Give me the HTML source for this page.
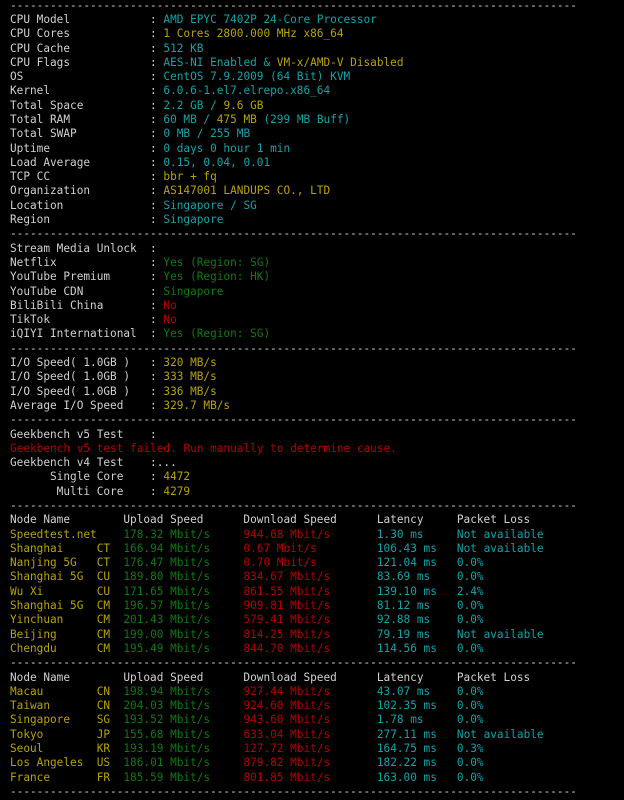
<!DOCTYPE html>
<html><head><meta charset="utf-8"><style>
html,body{margin:0;padding:0;background:#000;width:624px;height:800px;overflow:hidden}
pre{margin:0;position:absolute;left:10px;top:-1.4px;font-family:"DejaVu Sans Mono","Liberation Mono",monospace;font-size:11.08px;line-height:14.29px;color:#d0d0d0;white-space:pre}
.c{color:#13a3a8}.y{color:#b8a208}.g{color:#0e7a10}.r{color:#b40000}
</style></head><body><pre>-------------------------------------------------------------------------------------
CPU Model            : <span class="c">AMD EPYC 7402P 24-Core Processor</span>
CPU Cores            : <span class="y">1 Cores 2800.000 MHz x86_64</span>
CPU Cache            : <span class="c">512 KB</span>
CPU Flags            : <span class="c">AES-NI Enabled &amp; </span><span class="y">VM-x/AMD-V Disabled</span>
OS                   : <span class="c">CentOS 7.9.2009 (64 Bit) KVM</span>
Kernel               : <span class="c">6.0.6-1.el7.elrepo.x86_64</span>
Total Space          : <span class="c">2.2 GB / </span><span class="y">9.6 GB</span>
Total RAM            : <span class="c">60 MB / </span><span class="y">475 MB</span><span class="c"> (299 MB Buff)</span>
Total SWAP           : <span class="c">0 MB / 255 MB</span>
Uptime               : <span class="c">0 days 0 hour 1 min</span>
Load Average         : <span class="c">0.15, 0.04, 0.01</span>
TCP CC               : <span class="y">bbr + fq</span>
Organization         : <span class="y">AS147001 LANDUPS CO., LTD</span>
Location             : <span class="c">Singapore / SG</span>
Region               : <span class="c">Singapore</span>
-------------------------------------------------------------------------------------
Stream Media Unlock  :
Netflix              : <span class="g">Yes (Region: SG)</span>
YouTube Premium      : <span class="g">Yes (Region: HK)</span>
YouTube CDN          : <span class="g">Singapore</span>
BiliBili China       : <span class="r">No</span>
TikTok               : <span class="r">No</span>
iQIYI International  : <span class="g">Yes (Region: SG)</span>
-------------------------------------------------------------------------------------
I/O Speed( 1.0GB )   : <span class="y">320 MB/s</span>
I/O Speed( 1.0GB )   : <span class="y">333 MB/s</span>
I/O Speed( 1.0GB )   : <span class="y">336 MB/s</span>
Average I/O Speed    : <span class="y">329.7 MB/s</span>
-------------------------------------------------------------------------------------
Geekbench v5 Test    :
<span class="r">Geekbench v5 test failed. Run manually to determine cause.</span>
Geekbench v4 Test    :...
      Single Core    : <span class="y">4472</span>
       Multi Core    : <span class="y">4279</span>
-------------------------------------------------------------------------------------
Node Name        Upload Speed      Download Speed      Latency     Packet Loss
<span class="y">Speedtest.net    </span><span class="g">178.32 Mbit/s     </span><span class="r">944.68 Mbit/s       </span><span class="c">1.30 ms     Not available</span>
<span class="y">Shanghai     CT  </span><span class="g">166.94 Mbit/s     </span><span class="r">0.67 Mbit/s         </span><span class="c">106.43 ms   Not available</span>
<span class="y">Nanjing 5G   CT  </span><span class="g">176.47 Mbit/s     </span><span class="r">0.70 Mbit/s         </span><span class="c">121.04 ms   0.0%</span>
<span class="y">Shanghai 5G  CU  </span><span class="g">189.80 Mbit/s     </span><span class="r">834.67 Mbit/s       </span><span class="c">83.69 ms    0.0%</span>
<span class="y">Wu Xi        CU  </span><span class="g">171.65 Mbit/s     </span><span class="r">861.55 Mbit/s       </span><span class="c">139.10 ms   2.4%</span>
<span class="y">Shanghai 5G  CM  </span><span class="g">196.57 Mbit/s     </span><span class="r">909.81 Mbit/s       </span><span class="c">81.12 ms    0.0%</span>
<span class="y">Yinchuan     CM  </span><span class="g">201.43 Mbit/s     </span><span class="r">579.41 Mbit/s       </span><span class="c">92.88 ms    0.0%</span>
<span class="y">Beijing      CM  </span><span class="g">199.00 Mbit/s     </span><span class="r">814.25 Mbit/s       </span><span class="c">79.19 ms    Not available</span>
<span class="y">Chengdu      CM  </span><span class="g">195.49 Mbit/s     </span><span class="r">844.70 Mbit/s       </span><span class="c">114.56 ms   0.0%</span>
-------------------------------------------------------------------------------------
Node Name        Upload Speed      Download Speed      Latency     Packet Loss
<span class="y">Macau        CN  </span><span class="g">198.94 Mbit/s     </span><span class="r">927.44 Mbit/s       </span><span class="c">43.07 ms    0.0%</span>
<span class="y">Taiwan       CN  </span><span class="g">204.03 Mbit/s     </span><span class="r">924.60 Mbit/s       </span><span class="c">102.35 ms   0.0%</span>
<span class="y">Singapore    SG  </span><span class="g">193.52 Mbit/s     </span><span class="r">943.60 Mbit/s       </span><span class="c">1.78 ms     0.0%</span>
<span class="y">Tokyo        JP  </span><span class="g">155.68 Mbit/s     </span><span class="r">633.04 Mbit/s       </span><span class="c">277.11 ms   Not available</span>
<span class="y">Seoul        KR  </span><span class="g">193.19 Mbit/s     </span><span class="r">127.72 Mbit/s       </span><span class="c">164.75 ms   0.3%</span>
<span class="y">Los Angeles  US  </span><span class="g">186.01 Mbit/s     </span><span class="r">879.82 Mbit/s       </span><span class="c">182.22 ms   0.0%</span>
<span class="y">France       FR  </span><span class="g">185.59 Mbit/s     </span><span class="r">801.85 Mbit/s       </span><span class="c">163.00 ms   0.0%</span>
-------------------------------------------------------------------------------------
</pre></body></html>
